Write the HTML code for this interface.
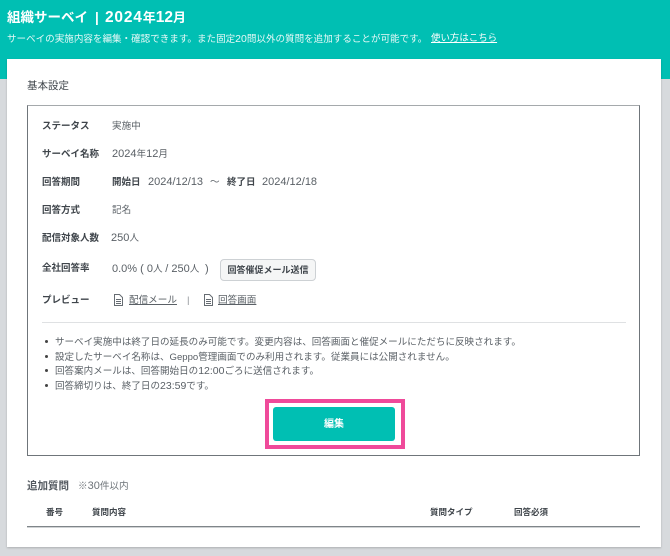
<!DOCTYPE html>
<html lang="ja"><head><meta charset="utf-8"><style>
html,body{margin:0;padding:0}
body{width:670px;height:556px;position:relative;overflow:hidden;background:#d7dadd;font-family:"Liberation Sans","Noto Sans CJK JP",sans-serif;color:#555b61;font-size:9.6px}
.a{position:absolute;white-space:nowrap;line-height:14px}
.b{font-weight:bold;color:#3f454b;font-size:9.5px}
.n{font-size:9.6px;color:#5a6066}
.d{font-size:11px}
.e{font-size:10.5px}
a{color:inherit;text-decoration:underline}
</style></head><body>
<div class="a" style="left:0;top:0;width:670px;height:79px;background:#00bfb3"></div>
<div class="a" style="left:7px;top:10px;font-size:13.5px;line-height:16px;font-weight:bold;color:#fff">組織サーベイ</div>
<div class="a" style="left:95px;top:10px;font-size:13.5px;line-height:16px;font-weight:bold;color:#fff">|</div>
<div class="a" style="left:105px;top:10px;font-size:13px;line-height:16px;font-weight:bold;color:#fff"><span style="font-size:15.5px;letter-spacing:.8px">2024</span>年<span style="font-size:15.5px">12</span>月</div>
<div class="a" style="left:7px;top:32px;font-size:9.55px;color:#e6f9f7">サーベイの実施内容を編集・確認できます。また固定<span class="e">20</span>問以外の質問を追加することが可能です。</div>
<div class="a" style="left:431px;top:32px;font-size:9.45px;color:#fff"><a>使い方はこちら</a></div>
<div class="a" style="left:7px;top:59px;width:654px;height:488px;background:#fff;box-shadow:0 1px 2px rgba(0,0,0,.2)"></div>
<div class="a" style="left:27px;top:79px;font-size:10.5px;color:#3f454b">基本設定</div>
<div class="a" style="left:27px;top:105px;width:611px;height:349px;border:1px solid #6f757a;border-top-color:#a5a9ac"></div>

<div class="a b" style="left:42px;top:120px">ステータス</div><div class="a n" style="left:112px;top:120px">実施中</div>
<div class="a b" style="left:42px;top:148px">サーベイ名称</div><div class="a n" style="left:112px;top:147px"><span class="d">2024</span>年<span class="d">12</span>月</div>
<div class="a b" style="left:42px;top:176px">回答期間</div>
<div class="a b" style="left:112px;top:176px">開始日</div><div class="a n d" style="left:148px;top:175px">2024/12/13</div><div class="a n" style="left:210px;top:176px">～</div>
<div class="a b" style="left:227px;top:176px">終了日</div><div class="a n d" style="left:262px;top:175px">2024/12/18</div>
<div class="a b" style="left:42px;top:204px">回答方式</div><div class="a n" style="left:112px;top:204px">記名</div>
<div class="a b" style="left:42px;top:232px">配信対象人数</div><div class="a n" style="left:111px;top:231px"><span class="d">250</span>人</div>
<div class="a b" style="left:42px;top:262px">全社回答率</div><div class="a n" style="left:112px;top:262px"><span class="d">0.0% ( 0</span>人 <span class="d">/ 250</span>人 <span class="d">&nbsp;)</span></div>
<div class="a b" style="left:220px;top:259px;width:94px;height:20px;line-height:20px;text-align:center;border:1px solid #cdd1d4;border-radius:4px;background:#f5f6f6;color:#3f454b;font-size:9px">回答催促メール送信</div>
<div class="a b" style="left:42px;top:294px">プレビュー</div>
<svg class="a" style="left:113px;top:294px" width="11" height="12" viewBox="0 0 11 12" fill="none" stroke="#666c72"><path d="M1.5.5h5l3 3v8h-8zM3 5.5h5M3 7.5h5M3 9.5h5"/></svg>
<div class="a n" style="left:129px;top:294px"><a>配信メール</a></div>
<div class="a n" style="left:187px;top:294px;color:#8a8f94">|</div>
<svg class="a" style="left:203px;top:294px" width="11" height="12" viewBox="0 0 11 12" fill="none" stroke="#666c72"><path d="M1.5.5h5l3 3v8h-8zM3 5.5h5M3 7.5h5M3 9.5h5"/></svg>
<div class="a n" style="left:218px;top:294px"><a>回答画面</a></div>
<div class="a" style="left:42px;top:322px;width:584px;height:1px;background:#dfe1e3"></div>

<div class="a" style="left:45px;top:340px;width:3px;height:3px;border-radius:50%;background:#444"></div>
<div class="a" style="left:45px;top:355px;width:3px;height:3px;border-radius:50%;background:#444"></div>
<div class="a" style="left:45px;top:369px;width:3px;height:3px;border-radius:50%;background:#444"></div>
<div class="a" style="left:45px;top:384px;width:3px;height:3px;border-radius:50%;background:#444"></div>
<div class="a n" style="left:55px;top:336px;font-size:9.55px">サーベイ実施中は終了日の延長のみ可能です。変更内容は、回答画面と催促メールにただちに反映されます。</div>
<div class="a n" style="left:55px;top:351px;font-size:9.55px">設定したサーベイ名称は、Geppo管理画面でのみ利用されます。従業員には公開されません。</div>
<div class="a n" style="left:55px;top:364px;font-size:9.55px">回答案内メールは、回答開始日の<span class="e">12:00</span>ごろに送信されます。</div>
<div class="a n" style="left:55px;top:379px;font-size:9.55px">回答締切りは、終了日の<span class="e">23:59</span>です。</div>

<div class="a" style="left:265px;top:399px;width:132px;height:42px;border:4px solid #ef4a9a"></div>
<div class="a" style="left:273px;top:407px;width:122px;height:34px;line-height:35px;border-radius:3px;background:#00bfb3;color:#fff;font-weight:bold;font-size:10px;text-align:center">編集</div>

<div class="a" style="left:27px;top:479px;font-size:10.5px;font-weight:bold;color:#555b61">追加質問</div>
<div class="a n" style="left:78px;top:479px;color:#6d7378">※<span class="d">30</span>件以内</div>
<div class="a b" style="left:46px;top:505px;font-size:8.5px">番号</div>
<div class="a b" style="left:92px;top:505px;font-size:8.5px">質問内容</div>
<div class="a b" style="left:430px;top:505px;font-size:8.5px">質問タイプ</div>
<div class="a b" style="left:514px;top:505px;font-size:8.5px">回答必須</div>
<div class="a" style="left:27px;top:526px;width:613px;height:1px;background:#7f8589;box-shadow:0 1px 0 #d0d3d5"></div>
</body></html>
